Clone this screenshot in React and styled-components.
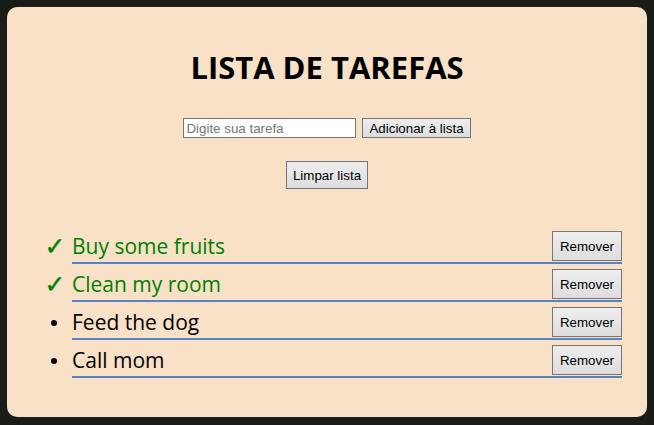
import React from "react";
import styled, { createGlobalStyle } from "styled-components";

const Global = createGlobalStyle`
  html, body { margin: 0; padding: 0; background: #1a1d17; }
  body { font-family: "Open Sans", sans-serif; }
  * { box-sizing: border-box; }
`;

const Card = styled.main`
  margin: 7px;
  height: 410px;
  background: #f8e1c7;
  border-radius: 10px;
  padding: 40px 25px 0 0;
  display: flex;
  flex-direction: column;
  align-items: stretch;
`;

const Title = styled.h1`
  margin: 0 0 30px 25px;
  text-align: center;
  font-family: "Open Sans", sans-serif;
  font-weight: 700;
  font-size: 31px;
  line-height: 41px;
  color: #000;
`;

const Form = styled.div`
  display: flex;
  justify-content: center;
  gap: 6px;
  margin-left: 25px;
`;

const Input = styled.input`
  width: 173px;
  height: 20px;
  border: 1px solid #767676;
  background: #fff;
  padding: 1px 2px;
  font-family: Arial, "Liberation Sans", sans-serif;
  font-size: 13.33px;
  &::placeholder { color: #757575; }
`;

const Button = styled.button`
  font-family: Arial, "Liberation Sans", sans-serif;
  font-size: 13.33px;
  color: #000;
  border: 1px solid #767676;
  border-radius: 0;
  background: linear-gradient(#eeeeee, #dddddd);
  padding: ${(p) => p.$pad || "1px 6px"};
  height: ${(p) => p.$h || 20}px;
  cursor: pointer;
`;

const ClearRow = styled.div`
  display: flex;
  justify-content: center;
  margin: 23px 0 41px 25px;
`;

const List = styled.ul`
  list-style: none;
  margin: 0;
  padding: 0 0 0 31px;
  display: flex;
  flex-direction: column;
  gap: 4px;
`;

const Item = styled.li`
  display: flex;
  align-items: stretch;
`;

const Marker = styled.span`
  width: 34px;
  flex: none;
  display: flex;
  align-items: center;
  justify-content: center;
  color: ${(p) => (p.$done ? "#008000" : "#000")};
  font-size: 25px;
  font-weight: 400;
  font-family: "DejaVu Sans", sans-serif;
  -webkit-text-stroke: 0.4px currentColor;
  padding-bottom: 2px;
`;

const Dot = styled.span`
  width: 6px;
  height: 6px;
  border-radius: 50%;
  background: #000;
  margin: 2px 3px 0 0;
`;

const Content = styled.div`
  flex: 1;
  display: flex;
  align-items: center;
  justify-content: space-between;
  border-bottom: 2px solid #5b82c4;
  padding: 1px 0 1px;
`;

const Text = styled.span`
  font-family: "Open Sans", sans-serif;
  font-size: 21px;
  color: ${(p) => (p.$done ? "#008000" : "#000")};
  line-height: 30px;
`;

const tasks = [
  { text: "Buy some fruits", done: true },
  { text: "Clean my room", done: true },
  { text: "Feed the dog", done: false },
  { text: "Call mom", done: false },
];

export default function App() {
  return (
    <>
      <Global />
      <Card>
        <Title>LISTA DE TAREFAS</Title>
        <Form>
          <Input placeholder="Digite sua tarefa" />
          <Button>Adicionar à lista</Button>
        </Form>
        <ClearRow>
          <Button $pad="1px 6px" $h={28}>Limpar lista</Button>
        </ClearRow>
        <List>
          {tasks.map((t) => (
            <Item key={t.text}>
              <Marker $done={t.done}>{t.done ? "✓" : <Dot />}</Marker>
              <Content>
                <Text $done={t.done}>{t.text}</Text>
                <Button $pad="1px 7px" $h={30}>Remover</Button>
              </Content>
            </Item>
          ))}
        </List>
      </Card>
    </>
  );
}
